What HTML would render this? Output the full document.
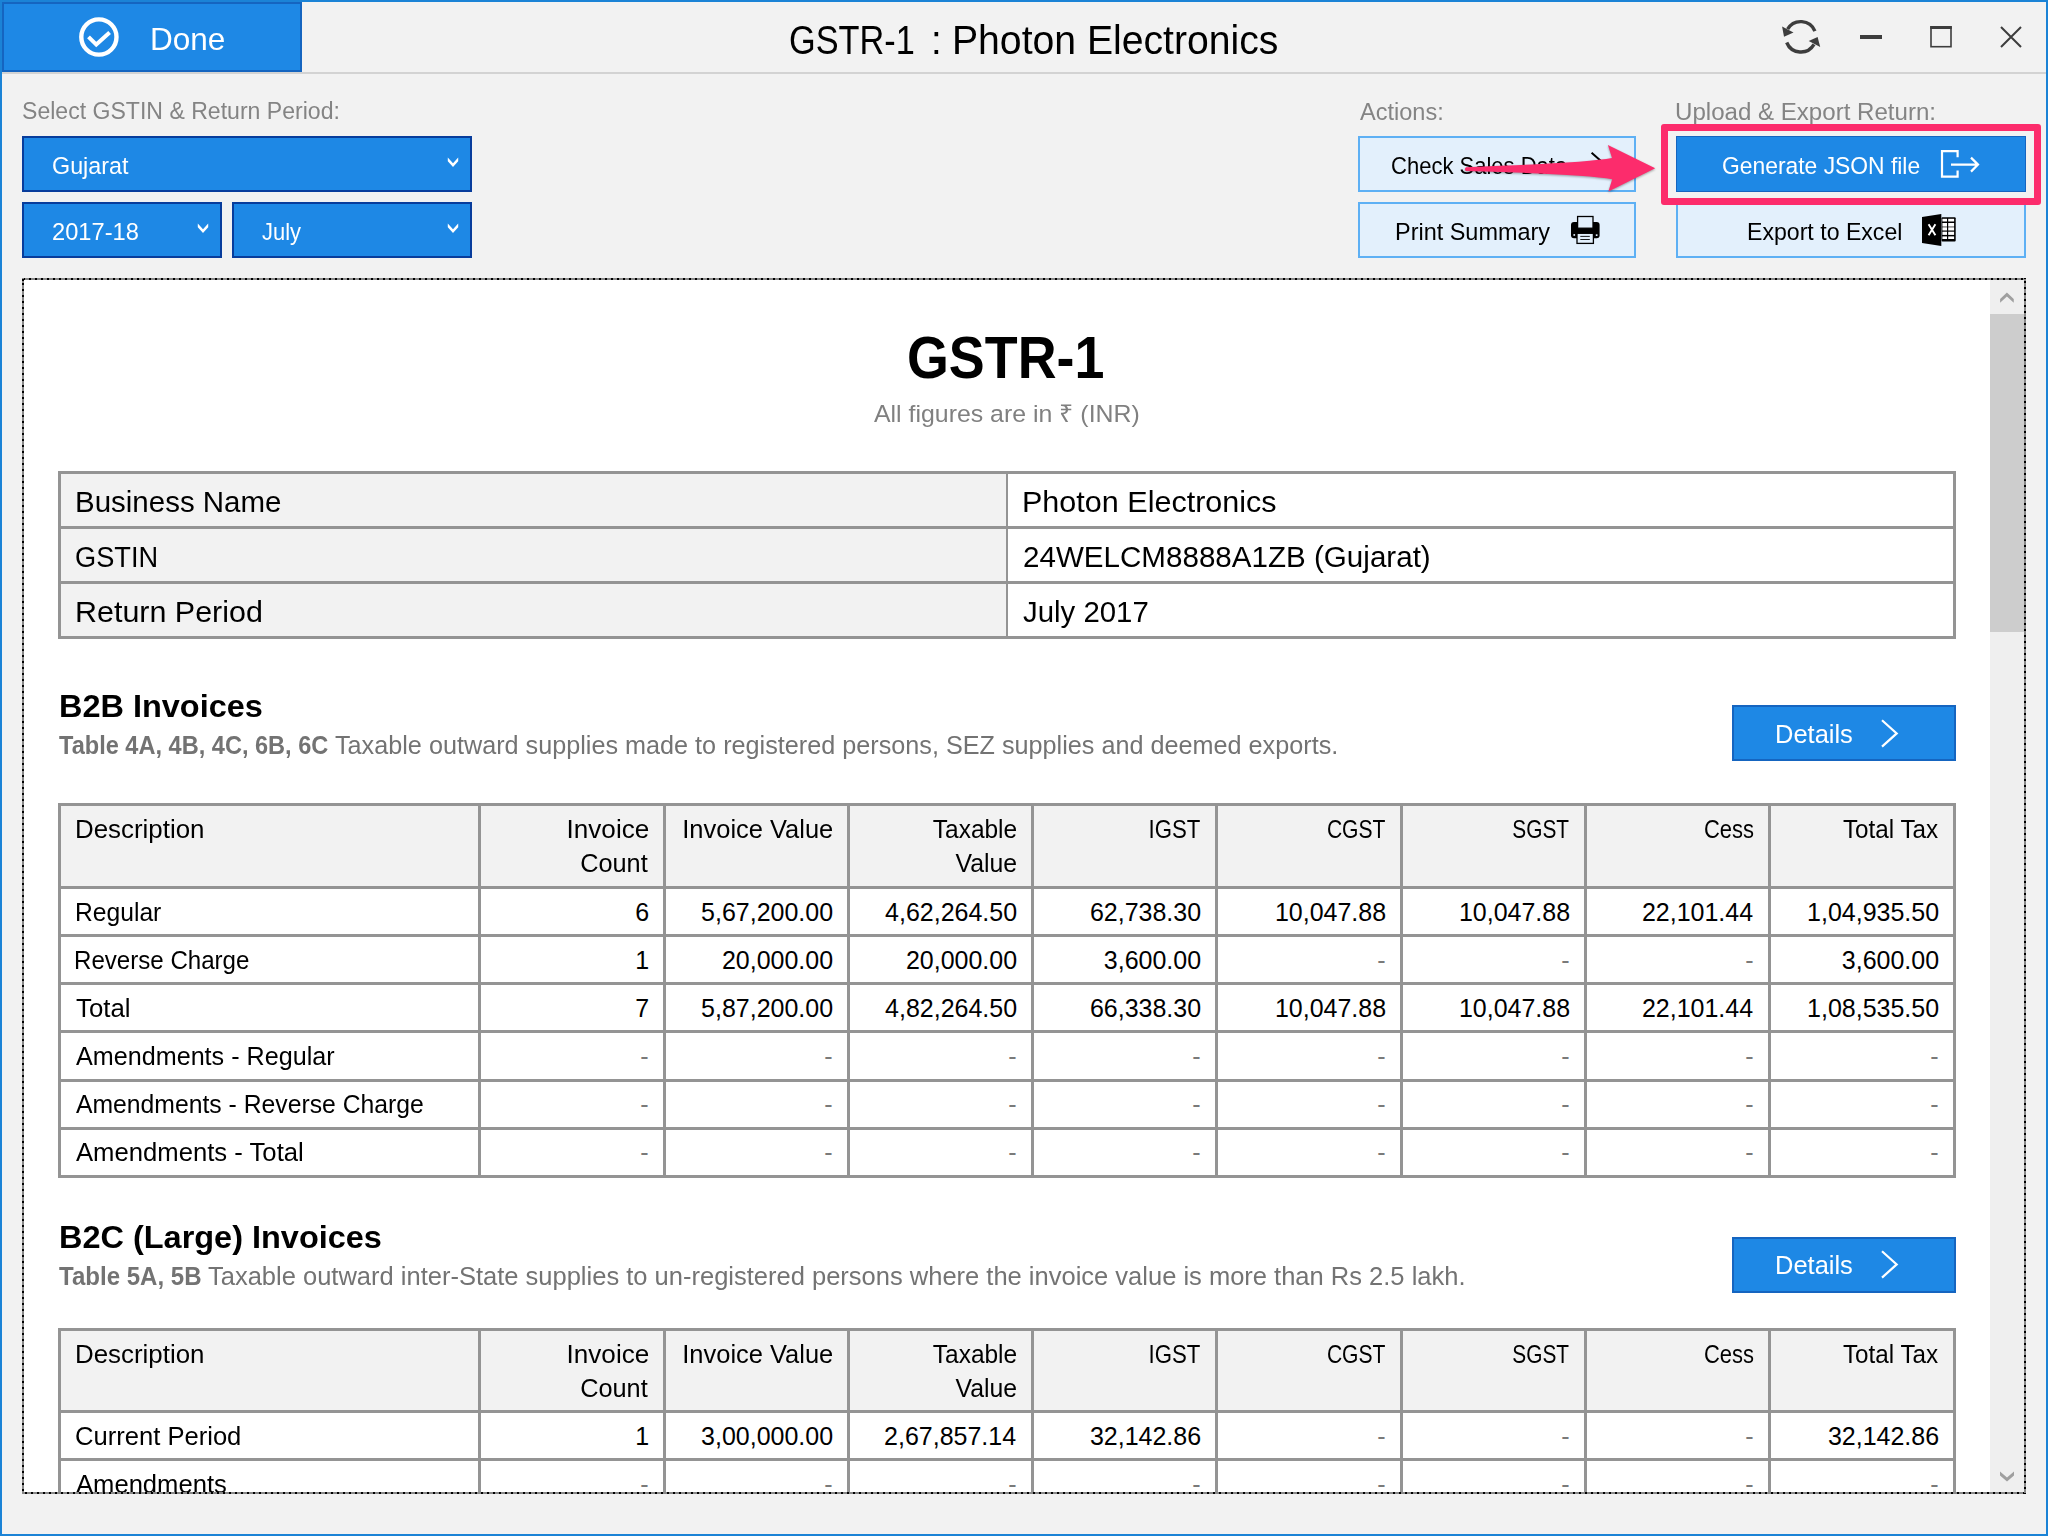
<!DOCTYPE html><html><head><meta charset="utf-8"><style>html,body{margin:0;padding:0;width:2048px;height:1536px;overflow:hidden;background:#f2f2f2;}body{position:relative;font-family:"Liberation Sans", sans-serif;}.t{position:absolute;line-height:1;white-space:nowrap;}</style></head><body><div style="position:absolute;left:2px;top:2px;width:300.00px;height:70.00px;background:#1e88e5;box-sizing:border-box;border:2px solid #1565c0;"></div>
<div style="position:absolute;left:2px;top:72px;width:2044.00px;height:2.00px;background:#d3d3d3;"></div>
<svg style="position:absolute;left:0;top:0" width="310" height="80"><circle cx="98.9" cy="37" r="17.6" fill="none" stroke="#fff" stroke-width="4.4"/><path d="M88.5 36.8 L96.3 44.6 L109.6 32.6" fill="none" stroke="#fff" stroke-width="4"/></svg>
<svg style="position:absolute;left:1760px;top:0" width="286" height="72"><g fill="none" stroke="#3d3d3d" stroke-width="3.4"><path d="M54.9 31.1 A 15.25 15.25 0 0 0 27.6 29.2"/><path d="M26.7 42.5 A 15.25 15.25 0 0 0 54.0 44.4"/></g><path d="M22.1 26.5 L24 36.7 L33.5 32.5 Z" fill="#3d3d3d"/><path d="M60.2 47.1 L57.6 37 L48.7 41.1 Z" fill="#3d3d3d"/><rect x="100" y="35" width="22" height="4" fill="#3d3d3d"/><rect x="171" y="27" width="20" height="19.7" fill="none" stroke="#3d3d3d" stroke-width="1.6"/><rect x="170.2" y="26" width="21.6" height="3" fill="#3d3d3d"/><path d="M241 27 L261 47 M261 27 L241 47" stroke="#3d3d3d" stroke-width="2"/></svg>
<div style="position:absolute;left:22px;top:136px;width:450.00px;height:56.00px;background:#1e88e5;box-sizing:border-box;border:2px solid #083d9c;"></div>
<svg style="position:absolute;left:444.5px;top:156px" width="16" height="14"><path d="M2.8 1.6 L8 7.3 L13.2 1.6 L13.2 5.25 L8 11 L2.8 5.25 Z" fill="#fff"/></svg>
<div style="position:absolute;left:22px;top:202px;width:200.00px;height:56.00px;background:#1e88e5;box-sizing:border-box;border:2px solid #083d9c;"></div>
<svg style="position:absolute;left:195px;top:222px" width="16" height="14"><path d="M2.8 1.6 L8 7.3 L13.2 1.6 L13.2 5.25 L8 11 L2.8 5.25 Z" fill="#fff"/></svg>
<div style="position:absolute;left:232px;top:202px;width:240.00px;height:56.00px;background:#1e88e5;box-sizing:border-box;border:2px solid #083d9c;"></div>
<svg style="position:absolute;left:444.5px;top:222px" width="16" height="14"><path d="M2.8 1.6 L8 7.3 L13.2 1.6 L13.2 5.25 L8 11 L2.8 5.25 Z" fill="#fff"/></svg>
<div style="position:absolute;left:1358px;top:136px;width:278.00px;height:56.00px;background:#e3f0fc;box-sizing:border-box;border:2px solid #5eb0f4;"></div>
<div style="position:absolute;left:1358px;top:202px;width:278.00px;height:56.00px;background:#e3f0fc;box-sizing:border-box;border:2px solid #5eb0f4;"></div>
<div style="position:absolute;left:1676px;top:202px;width:350.00px;height:56.00px;background:#e3f0fc;box-sizing:border-box;border:2px solid #5eb0f4;"></div>
<div style="position:absolute;left:1676px;top:136px;width:350.00px;height:56.00px;background:#1e88e5;box-sizing:border-box;border:1.5px solid #1565c0;"></div>
<svg style="position:absolute;left:1585px;top:148px" width="30" height="36"><path d="M6.6 4.8 L20.5 17 L8.4 27.6" fill="none" stroke="#000" stroke-width="2"/></svg>
<svg style="position:absolute;left:1570px;top:214px" width="32" height="32"><rect x="1" y="8" width="28.6" height="16.3" rx="3" fill="#000"/><rect x="7.6" y="2.5" width="15.4" height="11.7" fill="#e3f0fc" stroke="#000" stroke-width="1.3"/><rect x="7" y="19.3" width="16.4" height="10.1" fill="#e3f0fc" stroke="#000" stroke-width="1.3"/><path d="M10.3 22.4 H19.8 M10.3 25.5 H19.8" stroke="#000" stroke-width="0.9"/><rect x="3.4" y="20.1" width="1.7" height="1.7" fill="#e3f0fc"/><rect x="25.8" y="20.3" width="1.7" height="1.7" fill="#e3f0fc"/></svg>
<svg style="position:absolute;left:1920px;top:212px" width="40" height="36"><path d="M2 5 L21.3 2 V34 L2 31 Z" fill="#000"/><path d="M8.6 12.2 L15.4 23.2 M15.4 12.2 L8.6 23.2" stroke="#fff" stroke-width="1.9"/><rect x="21.5" y="5.3" width="14.2" height="24.2" rx="1" fill="#000"/><rect x="22.4" y="6.8" width="4.6" height="2.7" fill="#fff"/><rect x="28.2" y="6.8" width="5.9" height="2.7" fill="#fff"/><rect x="22.4" y="11" width="4.6" height="3.6" fill="#fff"/><rect x="28.2" y="11" width="5.9" height="3.6" fill="#fff"/><rect x="22.4" y="15.3" width="4.6" height="3.2" fill="#fff"/><rect x="28.2" y="15.3" width="5.9" height="3.2" fill="#fff"/><rect x="22.4" y="19.7" width="4.6" height="3.2" fill="#fff"/><rect x="28.2" y="19.7" width="5.9" height="3.2" fill="#fff"/><rect x="22.4" y="24.4" width="4.6" height="2.6" fill="#fff"/><rect x="28.2" y="24.4" width="5.9" height="2.6" fill="#fff"/></svg>
<svg style="position:absolute;left:1936px;top:146px" width="48" height="36"><path d="M21.6 11.3 V5.2 H6 V30.6 H21.6 V24.6" fill="none" stroke="#fff" stroke-width="2.2"/><path d="M15 18.6 H42 M35 11.6 L42 18.6 L35 25.6" fill="none" stroke="#fff" stroke-width="2.2"/></svg>
<div style="position:absolute;left:24px;top:280px;width:2000.00px;height:1212.00px;background:#fff;"></div>
<div style="position:absolute;left:1990px;top:280px;width:34.00px;height:1212.00px;background:#efefef;"></div>
<div style="position:absolute;left:1990px;top:314px;width:34.00px;height:318.00px;background:#cdcdcd;"></div>
<svg style="position:absolute;left:1990px;top:280px" width="34" height="34"><path d="M10.1 19.1 L16.9 12.5 L23.75 19.1 L23.75 22.8 L16.9 16.6 L10.1 22.8 Z" fill="#9f9f9f"/></svg>
<svg style="position:absolute;left:1990px;top:1458px" width="34" height="34"><path d="M10 13.6 L17 19.5 L24 13.6 L24 17.6 L17 23.6 L10 17.6 Z" fill="#9f9f9f"/></svg>
<div style="position:absolute;left:61px;top:474px;width:945.00px;height:162.00px;background:#f2f2f2;"></div>
<div style="position:absolute;left:58px;top:471px;width:1898.00px;height:3.00px;background:#949494;"></div>
<div style="position:absolute;left:58px;top:526px;width:1898.00px;height:3.00px;background:#949494;"></div>
<div style="position:absolute;left:58px;top:581px;width:1898.00px;height:3.00px;background:#949494;"></div>
<div style="position:absolute;left:58px;top:636px;width:1898.00px;height:3.00px;background:#949494;"></div>
<div style="position:absolute;left:58px;top:471px;width:3.00px;height:168.00px;background:#949494;"></div>
<div style="position:absolute;left:1006px;top:471px;width:2.00px;height:168.00px;background:#949494;"></div>
<div style="position:absolute;left:1953px;top:471px;width:3.00px;height:168.00px;background:#949494;"></div>
<div style="position:absolute;left:1732px;top:705px;width:223.60px;height:55.80px;background:#1e88e5;box-sizing:border-box;border:2px solid #1565c0;"></div>
<svg style="position:absolute;left:1872px;top:715px" width="34" height="38"><path d="M10 5.2 L24.7 18.4 L10 31.6" fill="none" stroke="#fff" stroke-width="2.2"/></svg>
<div style="position:absolute;left:61px;top:806px;width:1892.00px;height:80.00px;background:#f2f2f2;"></div>
<div style="position:absolute;left:58px;top:803px;width:1898.00px;height:3.00px;background:#949494;"></div>
<div style="position:absolute;left:58px;top:886px;width:1898.00px;height:3.00px;background:#949494;"></div>
<div style="position:absolute;left:58px;top:934px;width:1898.00px;height:3.00px;background:#949494;"></div>
<div style="position:absolute;left:58px;top:982px;width:1898.00px;height:3.00px;background:#949494;"></div>
<div style="position:absolute;left:58px;top:1030px;width:1898.00px;height:3.00px;background:#949494;"></div>
<div style="position:absolute;left:58px;top:1079px;width:1898.00px;height:3.00px;background:#949494;"></div>
<div style="position:absolute;left:58px;top:1127px;width:1898.00px;height:3.00px;background:#949494;"></div>
<div style="position:absolute;left:58px;top:1175px;width:1898.00px;height:3.00px;background:#949494;"></div>
<div style="position:absolute;left:58px;top:803px;width:3.00px;height:375.00px;background:#949494;"></div>
<div style="position:absolute;left:478px;top:803px;width:3.00px;height:375.00px;background:#949494;"></div>
<div style="position:absolute;left:663px;top:803px;width:3.00px;height:375.00px;background:#949494;"></div>
<div style="position:absolute;left:847px;top:803px;width:3.00px;height:375.00px;background:#949494;"></div>
<div style="position:absolute;left:1031px;top:803px;width:3.00px;height:375.00px;background:#949494;"></div>
<div style="position:absolute;left:1215px;top:803px;width:3.00px;height:375.00px;background:#949494;"></div>
<div style="position:absolute;left:1400px;top:803px;width:3.00px;height:375.00px;background:#949494;"></div>
<div style="position:absolute;left:1584px;top:803px;width:3.00px;height:375.00px;background:#949494;"></div>
<div style="position:absolute;left:1768px;top:803px;width:3.00px;height:375.00px;background:#949494;"></div>
<div style="position:absolute;left:1953px;top:803px;width:3.00px;height:375.00px;background:#949494;"></div>
<div style="position:absolute;left:1732px;top:1237px;width:223.60px;height:55.80px;background:#1e88e5;box-sizing:border-box;border:2px solid #1565c0;"></div>
<svg style="position:absolute;left:1872px;top:1245.8px" width="34" height="38"><path d="M10 5.2 L24.7 18.4 L10 31.6" fill="none" stroke="#fff" stroke-width="2.2"/></svg>
<div style="position:absolute;left:61px;top:1331px;width:1892.00px;height:79.00px;background:#f2f2f2;"></div>
<div style="position:absolute;left:58px;top:1328px;width:1898.00px;height:3.00px;background:#949494;"></div>
<div style="position:absolute;left:58px;top:1410px;width:1898.00px;height:3.00px;background:#949494;"></div>
<div style="position:absolute;left:58px;top:1458px;width:1898.00px;height:3.00px;background:#949494;"></div>
<div style="position:absolute;left:58px;top:1506px;width:1898.00px;height:3.00px;background:#949494;"></div>
<div style="position:absolute;left:58px;top:1328px;width:3.00px;height:181.00px;background:#949494;"></div>
<div style="position:absolute;left:478px;top:1328px;width:3.00px;height:181.00px;background:#949494;"></div>
<div style="position:absolute;left:663px;top:1328px;width:3.00px;height:181.00px;background:#949494;"></div>
<div style="position:absolute;left:847px;top:1328px;width:3.00px;height:181.00px;background:#949494;"></div>
<div style="position:absolute;left:1031px;top:1328px;width:3.00px;height:181.00px;background:#949494;"></div>
<div style="position:absolute;left:1215px;top:1328px;width:3.00px;height:181.00px;background:#949494;"></div>
<div style="position:absolute;left:1400px;top:1328px;width:3.00px;height:181.00px;background:#949494;"></div>
<div style="position:absolute;left:1584px;top:1328px;width:3.00px;height:181.00px;background:#949494;"></div>
<div style="position:absolute;left:1768px;top:1328px;width:3.00px;height:181.00px;background:#949494;"></div>
<div style="position:absolute;left:1953px;top:1328px;width:3.00px;height:181.00px;background:#949494;"></div>
<span class="t" style="left:149.83px;transform-origin:left top;top:22.71px;font-size:32px;color:#fff;transform:scaleX(0.9850);">Done</span>
<span class="t" style="left:788.98px;transform-origin:left top;top:20.34px;font-size:40px;color:#000;transform:scaleX(0.8575);">GSTR-1</span>
<span class="t" style="left:930.72px;transform-origin:left top;top:20.34px;font-size:40px;color:#000;transform:scaleX(0.9600);">:</span>
<span class="t" style="left:951.66px;transform-origin:left top;top:20.34px;font-size:40px;color:#000;transform:scaleX(0.9784);">Photon Electronics</span>
<span class="t" style="left:22.01px;transform-origin:left top;top:100.48px;font-size:23.3px;color:#848484;transform:scaleX(0.9899);">Select GSTIN &amp; Return Period:</span>
<span class="t" style="left:1359.50px;transform-origin:left top;top:100.88px;font-size:23.3px;color:#848484;transform:scaleX(1.0099);">Actions:</span>
<span class="t" style="left:1675.47px;transform-origin:left top;top:100.88px;font-size:23.3px;color:#848484;transform:scaleX(1.0338);">Upload &amp; Export Return:</span>
<span class="t" style="left:52.02px;transform-origin:left top;top:154.84px;font-size:23.7px;color:#fff;transform:scaleX(0.9845);">Gujarat</span>
<span class="t" style="left:52.00px;transform-origin:left top;top:220.84px;font-size:23.7px;color:#fff;transform:scaleX(0.9993);">2017-18</span>
<span class="t" style="left:262.20px;transform-origin:left top;top:220.84px;font-size:23.7px;color:#fff;transform:scaleX(0.9271);">July</span>
<span class="t" style="left:1391.07px;transform-origin:left top;top:154.84px;font-size:23.7px;color:#000;transform:scaleX(0.9292);">Check Sales Data</span>
<span class="t" style="left:1395.01px;transform-origin:left top;top:220.94px;font-size:23.7px;color:#000;transform:scaleX(0.9898);">Print Summary</span>
<span class="t" style="left:1722.04px;transform-origin:left top;top:154.54px;font-size:23.7px;color:#fff;transform:scaleX(0.9647);">Generate JSON file</span>
<span class="t" style="left:1746.52px;transform-origin:left top;top:220.94px;font-size:23.7px;color:#000;transform:scaleX(0.9756);">Export to Excel</span>
<span class="t" style="left:907.28px;transform-origin:left top;top:329.26px;font-size:59px;color:#000;font-weight:700;transform:scaleX(0.9122);">GSTR-1</span>
<span class="t" style="left:874.40px;transform-origin:left top;top:401.76px;font-size:24.5px;color:#808080;transform:scaleX(1.0152);">All figures are in ₹ (INR)</span>
<span class="t" style="left:74.97px;transform-origin:left top;top:488.25px;font-size:29px;color:#000;transform:scaleX(1.0167);">Business Name</span>
<span class="t" style="left:1021.89px;transform-origin:left top;top:488.25px;font-size:29px;color:#000;transform:scaleX(1.0531);">Photon Electronics</span>
<span class="t" style="left:75.46px;transform-origin:left top;top:543.35px;font-size:29px;color:#000;transform:scaleX(0.9373);">GSTIN</span>
<span class="t" style="left:1022.98px;transform-origin:left top;top:543.35px;font-size:29px;color:#000;transform:scaleX(1.0200);">24WELCM8888A1ZB (Gujarat)</span>
<span class="t" style="left:74.90px;transform-origin:left top;top:598.15px;font-size:29px;color:#000;transform:scaleX(1.0501);">Return Period</span>
<span class="t" style="left:1022.90px;transform-origin:left top;top:598.15px;font-size:29px;color:#000;transform:scaleX(1.0129);">July 2017</span>
<span class="t" style="left:58.57px;transform-origin:left top;top:690.41px;font-size:32px;color:#000;font-weight:700;transform:scaleX(1.0143);">B2B Invoices</span>
<span class="t" style="left:58.80px;transform-origin:left top;top:733.14px;font-size:25px;color:#737373;font-weight:700;transform:scaleX(0.9426);">Table 4A, 4B, 4C, 6B, 6C</span>
<span class="t" style="left:335.40px;transform-origin:left top;top:733.14px;font-size:25px;color:#737373;transform:scaleX(1.0083);">Taxable outward supplies made to registered persons, SEZ supplies and deemed exports.</span>
<span class="t" style="left:1775.16px;transform-origin:left top;top:721.84px;font-size:25px;color:#fff;transform:scaleX(1.0187);">Details</span>
<span class="t" style="left:74.53px;transform-origin:left top;top:817.24px;font-size:25px;color:#000;transform:scaleX(1.0348);">Description</span>
<span class="t" style="right:1398.86px;transform-origin:right top;top:817.24px;font-size:25px;color:#000;transform:scaleX(1.0431);">Invoice</span>
<span class="t" style="right:1399.85px;transform-origin:right top;top:850.64px;font-size:25px;color:#000;transform:scaleX(1.0127);">Count</span>
<span class="t" style="right:1214.88px;transform-origin:right top;top:817.24px;font-size:25px;color:#000;transform:scaleX(1.0183);">Invoice Value</span>
<span class="t" style="right:1030.91px;transform-origin:right top;top:817.24px;font-size:25px;color:#000;transform:scaleX(0.9793);">Taxable</span>
<span class="t" style="right:1030.90px;transform-origin:right top;top:850.64px;font-size:25px;color:#000;transform:scaleX(0.9921);">Value</span>
<span class="t" style="right:847.56px;transform-origin:right top;top:817.24px;font-size:25px;color:#000;transform:scaleX(0.8882);">IGST</span>
<span class="t" style="right:662.57px;transform-origin:right top;top:817.24px;font-size:25px;color:#000;transform:scaleX(0.8434);">CGST</span>
<span class="t" style="right:478.57px;transform-origin:right top;top:817.24px;font-size:25px;color:#000;transform:scaleX(0.8339);">SGST</span>
<span class="t" style="right:294.36px;transform-origin:right top;top:817.24px;font-size:25px;color:#000;transform:scaleX(0.8781);">Cess</span>
<span class="t" style="right:110.29px;transform-origin:right top;top:817.24px;font-size:25px;color:#000;transform:scaleX(0.9702);">Total Tax</span>
<span class="t" style="left:74.63px;transform-origin:left top;top:899.74px;font-size:25px;color:#000;transform:scaleX(0.9856);">Regular</span>
<span class="t" style="right:1398.90px;transform-origin:right top;top:899.74px;font-size:25px;color:#000;">6</span>
<span class="t" style="right:1214.90px;transform-origin:right top;top:899.74px;font-size:25px;color:#000;">5,67,200.00</span>
<span class="t" style="right:1030.90px;transform-origin:right top;top:899.74px;font-size:25px;color:#000;">4,62,264.50</span>
<span class="t" style="right:846.90px;transform-origin:right top;top:899.74px;font-size:25px;color:#000;">62,738.30</span>
<span class="t" style="right:661.90px;transform-origin:right top;top:899.74px;font-size:25px;color:#000;">10,047.88</span>
<span class="t" style="right:477.90px;transform-origin:right top;top:899.74px;font-size:25px;color:#000;">10,047.88</span>
<span class="t" style="right:294.90px;transform-origin:right top;top:899.74px;font-size:25px;color:#000;">22,101.44</span>
<span class="t" style="right:108.90px;transform-origin:right top;top:899.74px;font-size:25px;color:#000;">1,04,935.50</span>
<span class="t" style="left:73.97px;transform-origin:left top;top:947.89px;font-size:25px;color:#000;transform:scaleX(0.9636);">Reverse Charge</span>
<span class="t" style="right:1398.90px;transform-origin:right top;top:947.89px;font-size:25px;color:#000;">1</span>
<span class="t" style="right:1214.90px;transform-origin:right top;top:947.89px;font-size:25px;color:#000;">20,000.00</span>
<span class="t" style="right:1030.90px;transform-origin:right top;top:947.89px;font-size:25px;color:#000;">20,000.00</span>
<span class="t" style="right:846.90px;transform-origin:right top;top:947.89px;font-size:25px;color:#000;">3,600.00</span>
<span class="t" style="right:662.47px;transform-origin:right top;top:947.89px;font-size:25px;color:#7a7a7a;">-</span>
<span class="t" style="right:478.47px;transform-origin:right top;top:947.89px;font-size:25px;color:#7a7a7a;">-</span>
<span class="t" style="right:294.47px;transform-origin:right top;top:947.89px;font-size:25px;color:#7a7a7a;">-</span>
<span class="t" style="right:108.90px;transform-origin:right top;top:947.89px;font-size:25px;color:#000;">3,600.00</span>
<span class="t" style="left:75.90px;transform-origin:left top;top:996.04px;font-size:25px;color:#000;transform:scaleX(1.0321);">Total</span>
<span class="t" style="right:1398.90px;transform-origin:right top;top:996.04px;font-size:25px;color:#000;">7</span>
<span class="t" style="right:1214.90px;transform-origin:right top;top:996.04px;font-size:25px;color:#000;">5,87,200.00</span>
<span class="t" style="right:1030.90px;transform-origin:right top;top:996.04px;font-size:25px;color:#000;">4,82,264.50</span>
<span class="t" style="right:846.90px;transform-origin:right top;top:996.04px;font-size:25px;color:#000;">66,338.30</span>
<span class="t" style="right:661.90px;transform-origin:right top;top:996.04px;font-size:25px;color:#000;">10,047.88</span>
<span class="t" style="right:477.90px;transform-origin:right top;top:996.04px;font-size:25px;color:#000;">10,047.88</span>
<span class="t" style="right:294.90px;transform-origin:right top;top:996.04px;font-size:25px;color:#000;">22,101.44</span>
<span class="t" style="right:108.90px;transform-origin:right top;top:996.04px;font-size:25px;color:#000;">1,08,535.50</span>
<span class="t" style="left:75.90px;transform-origin:left top;top:1044.19px;font-size:25px;color:#000;transform:scaleX(1.0061);">Amendments - Regular</span>
<span class="t" style="right:1399.47px;transform-origin:right top;top:1044.19px;font-size:25px;color:#7a7a7a;">-</span>
<span class="t" style="right:1215.47px;transform-origin:right top;top:1044.19px;font-size:25px;color:#7a7a7a;">-</span>
<span class="t" style="right:1031.47px;transform-origin:right top;top:1044.19px;font-size:25px;color:#7a7a7a;">-</span>
<span class="t" style="right:847.47px;transform-origin:right top;top:1044.19px;font-size:25px;color:#7a7a7a;">-</span>
<span class="t" style="right:662.47px;transform-origin:right top;top:1044.19px;font-size:25px;color:#7a7a7a;">-</span>
<span class="t" style="right:478.47px;transform-origin:right top;top:1044.19px;font-size:25px;color:#7a7a7a;">-</span>
<span class="t" style="right:294.47px;transform-origin:right top;top:1044.19px;font-size:25px;color:#7a7a7a;">-</span>
<span class="t" style="right:109.47px;transform-origin:right top;top:1044.19px;font-size:25px;color:#7a7a7a;">-</span>
<span class="t" style="left:75.90px;transform-origin:left top;top:1092.34px;font-size:25px;color:#000;transform:scaleX(0.9893);">Amendments - Reverse Charge</span>
<span class="t" style="right:1399.47px;transform-origin:right top;top:1092.34px;font-size:25px;color:#7a7a7a;">-</span>
<span class="t" style="right:1215.47px;transform-origin:right top;top:1092.34px;font-size:25px;color:#7a7a7a;">-</span>
<span class="t" style="right:1031.47px;transform-origin:right top;top:1092.34px;font-size:25px;color:#7a7a7a;">-</span>
<span class="t" style="right:847.47px;transform-origin:right top;top:1092.34px;font-size:25px;color:#7a7a7a;">-</span>
<span class="t" style="right:662.47px;transform-origin:right top;top:1092.34px;font-size:25px;color:#7a7a7a;">-</span>
<span class="t" style="right:478.47px;transform-origin:right top;top:1092.34px;font-size:25px;color:#7a7a7a;">-</span>
<span class="t" style="right:294.47px;transform-origin:right top;top:1092.34px;font-size:25px;color:#7a7a7a;">-</span>
<span class="t" style="right:109.47px;transform-origin:right top;top:1092.34px;font-size:25px;color:#7a7a7a;">-</span>
<span class="t" style="left:75.90px;transform-origin:left top;top:1140.49px;font-size:25px;color:#000;transform:scaleX(1.0265);">Amendments - Total</span>
<span class="t" style="right:1399.47px;transform-origin:right top;top:1140.49px;font-size:25px;color:#7a7a7a;">-</span>
<span class="t" style="right:1215.47px;transform-origin:right top;top:1140.49px;font-size:25px;color:#7a7a7a;">-</span>
<span class="t" style="right:1031.47px;transform-origin:right top;top:1140.49px;font-size:25px;color:#7a7a7a;">-</span>
<span class="t" style="right:847.47px;transform-origin:right top;top:1140.49px;font-size:25px;color:#7a7a7a;">-</span>
<span class="t" style="right:662.47px;transform-origin:right top;top:1140.49px;font-size:25px;color:#7a7a7a;">-</span>
<span class="t" style="right:478.47px;transform-origin:right top;top:1140.49px;font-size:25px;color:#7a7a7a;">-</span>
<span class="t" style="right:294.47px;transform-origin:right top;top:1140.49px;font-size:25px;color:#7a7a7a;">-</span>
<span class="t" style="right:109.47px;transform-origin:right top;top:1140.49px;font-size:25px;color:#7a7a7a;">-</span>
<span class="t" style="left:58.57px;transform-origin:left top;top:1221.21px;font-size:32px;color:#000;font-weight:700;transform:scaleX(1.0145);">B2C (Large) Invoices</span>
<span class="t" style="left:58.80px;transform-origin:left top;top:1264.44px;font-size:25px;color:#737373;font-weight:700;transform:scaleX(0.9617);">Table 5A, 5B</span>
<span class="t" style="left:207.60px;transform-origin:left top;top:1264.44px;font-size:25px;color:#737373;transform:scaleX(1.0202);">Taxable outward inter-State supplies to un-registered persons where the invoice value is more than Rs 2.5 lakh.</span>
<span class="t" style="left:1775.16px;transform-origin:left top;top:1252.64px;font-size:25px;color:#fff;transform:scaleX(1.0187);">Details</span>
<span class="t" style="left:74.53px;transform-origin:left top;top:1342.24px;font-size:25px;color:#000;transform:scaleX(1.0348);">Description</span>
<span class="t" style="right:1398.86px;transform-origin:right top;top:1342.24px;font-size:25px;color:#000;transform:scaleX(1.0431);">Invoice</span>
<span class="t" style="right:1399.85px;transform-origin:right top;top:1375.64px;font-size:25px;color:#000;transform:scaleX(1.0127);">Count</span>
<span class="t" style="right:1214.88px;transform-origin:right top;top:1342.24px;font-size:25px;color:#000;transform:scaleX(1.0183);">Invoice Value</span>
<span class="t" style="right:1030.91px;transform-origin:right top;top:1342.24px;font-size:25px;color:#000;transform:scaleX(0.9793);">Taxable</span>
<span class="t" style="right:1030.90px;transform-origin:right top;top:1375.64px;font-size:25px;color:#000;transform:scaleX(0.9921);">Value</span>
<span class="t" style="right:847.56px;transform-origin:right top;top:1342.24px;font-size:25px;color:#000;transform:scaleX(0.8882);">IGST</span>
<span class="t" style="right:662.57px;transform-origin:right top;top:1342.24px;font-size:25px;color:#000;transform:scaleX(0.8434);">CGST</span>
<span class="t" style="right:478.57px;transform-origin:right top;top:1342.24px;font-size:25px;color:#000;transform:scaleX(0.8339);">SGST</span>
<span class="t" style="right:294.36px;transform-origin:right top;top:1342.24px;font-size:25px;color:#000;transform:scaleX(0.8781);">Cess</span>
<span class="t" style="right:110.29px;transform-origin:right top;top:1342.24px;font-size:25px;color:#000;transform:scaleX(0.9702);">Total Tax</span>
<span class="t" style="left:74.88px;transform-origin:left top;top:1423.74px;font-size:25px;color:#000;transform:scaleX(1.0232);">Current Period</span>
<span class="t" style="right:1398.90px;transform-origin:right top;top:1423.74px;font-size:25px;color:#000;">1</span>
<span class="t" style="right:1214.90px;transform-origin:right top;top:1423.74px;font-size:25px;color:#000;">3,00,000.00</span>
<span class="t" style="right:1031.90px;transform-origin:right top;top:1423.74px;font-size:25px;color:#000;">2,67,857.14</span>
<span class="t" style="right:846.90px;transform-origin:right top;top:1423.74px;font-size:25px;color:#000;">32,142.86</span>
<span class="t" style="right:662.47px;transform-origin:right top;top:1423.74px;font-size:25px;color:#7a7a7a;">-</span>
<span class="t" style="right:478.47px;transform-origin:right top;top:1423.74px;font-size:25px;color:#7a7a7a;">-</span>
<span class="t" style="right:294.47px;transform-origin:right top;top:1423.74px;font-size:25px;color:#7a7a7a;">-</span>
<span class="t" style="right:108.90px;transform-origin:right top;top:1423.74px;font-size:25px;color:#000;">32,142.86</span>
<span class="t" style="left:75.90px;transform-origin:left top;top:1471.89px;font-size:25px;color:#000;transform:scaleX(1.0239);">Amendments</span>
<span class="t" style="right:1399.47px;transform-origin:right top;top:1471.89px;font-size:25px;color:#7a7a7a;">-</span>
<span class="t" style="right:1215.47px;transform-origin:right top;top:1471.89px;font-size:25px;color:#7a7a7a;">-</span>
<span class="t" style="right:1031.47px;transform-origin:right top;top:1471.89px;font-size:25px;color:#7a7a7a;">-</span>
<span class="t" style="right:847.47px;transform-origin:right top;top:1471.89px;font-size:25px;color:#7a7a7a;">-</span>
<span class="t" style="right:662.47px;transform-origin:right top;top:1471.89px;font-size:25px;color:#7a7a7a;">-</span>
<span class="t" style="right:478.47px;transform-origin:right top;top:1471.89px;font-size:25px;color:#7a7a7a;">-</span>
<span class="t" style="right:294.47px;transform-origin:right top;top:1471.89px;font-size:25px;color:#7a7a7a;">-</span>
<span class="t" style="right:109.47px;transform-origin:right top;top:1471.89px;font-size:25px;color:#7a7a7a;">-</span><div style="position:absolute;left:1661px;top:124px;width:380px;height:81px;box-sizing:border-box;border:7px solid #fc2c6c;border-radius:3px"></div><svg style="position:absolute;left:1440px;top:130px" width="230" height="70"><path d="M26 37.2 Q145 33 172 28 L167.9 14.9 L215.2 38.3 L168.4 61.4 L172.2 49.2 Q145 44 26 41.1 Q23.8 39.15 26 37.2 Z" fill="#fc2c6c" style="filter:drop-shadow(0.6px 1.2px 0.9px rgba(0,0,0,0.35))"/></svg><div style="position:absolute;left:2px;top:1494px;width:2044px;height:40px;background:#f2f2f2"></div><div style="position:absolute;left:22px;top:278px;width:2004px;height:2px;background:repeating-linear-gradient(90deg,#000 0 2px,#888 2px 6px);background-position:1px 0;"></div><div style="position:absolute;left:22px;top:1492px;width:2004px;height:2px;background:repeating-linear-gradient(90deg,#000 0 2px,#888 2px 6px);background-position:3px 0;"></div><div style="position:absolute;left:22px;top:278px;width:2px;height:1216px;background:repeating-linear-gradient(180deg,#000 0 2px,#888 2px 6px);background-position:0 5px;"></div><div style="position:absolute;left:2024px;top:278px;width:2px;height:1216px;background:repeating-linear-gradient(180deg,#000 0 2px,#888 2px 6px);background-position:0 3px;"></div><div style="position:absolute;left:0;top:0;width:2048px;height:1536px;box-sizing:border-box;border:2px solid #1b83d6;"></div></body></html>
